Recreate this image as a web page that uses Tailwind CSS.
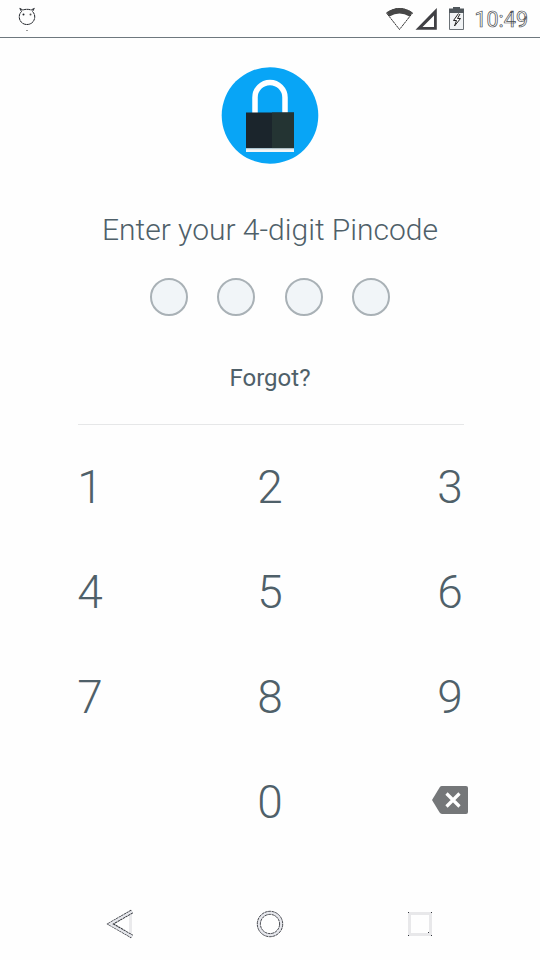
<!DOCTYPE html>
<html lang="en">
<head>
<meta charset="utf-8">
<title>Pincode</title>
<script src="https://cdn.jsdelivr.net/npm/@tailwindcss/browser@4"></script>
</head>
<body class="bg-[#fefefe]">
<div class="w-[540px] h-[960px] overflow-hidden flex flex-col items-center bg-[#fefefe] text-[#4f6069] font-['Roboto',sans-serif]">
  <header class="w-full h-[38px] shrink-0 border-b border-[#6e787e] flex items-start justify-between">
    <svg class="ml-[17px] mt-[6px]" width="20" height="26" viewBox="0 0 20 26" fill="none" stroke="#22252b" stroke-width="1" stroke-dasharray="3.5 .3">
      <path d="M4.500 5.500 2.700 2.300 5.800 4Q10 2.600 14.200 4L17.300 2.300 15.500 5.500Q18 8 17.700 11.500C17.200 16 14 18.500 10 18.500S2.800 16 2.300 11.500Q2 8 4.500 5.500"/>
      <circle cx="6.500" cy="8.600" r="1" fill="#22252b" stroke="none"/><circle cx="13.500" cy="8.600" r="1" fill="#555" stroke="none"/>
      <path d="M9 24.500h2" stroke="#999"/>
    </svg>
    <div class="flex items-start pr-[12px]">
      <svg class="mt-[6px]" width="88" height="26" viewBox="386 6 88 26">
        <path d="M386.500 13Q399.500 4 412.500 13L399.500 29.500Z" fill="#fff" stroke="#333" stroke-width="1" stroke-dasharray="2.500 .5"/>
        <path d="M386.500 12.500Q399.500 3.500 412.500 12.500L409.500 16.500Q399.500 10.500 389.500 16.500Z" fill="#474747"/>
        <path d="M436.800 8V29.700H415.500ZM434 15.500 422.500 27H434Z" fill="#404044" fill-rule="evenodd"/>
        <path d="M449.500 11H463.500V29.500H449.500Z" fill="#f1f3f5" stroke="#6b7176" stroke-width="1"/>
        <path d="M449 8.500H453V7H460V8.500H464V13H449Z" fill="#50575c"/>
        <path d="M458.500 13.500 453.500 20.500H456.500L454.500 26 460.500 18.500H457.500L460 14" fill="#fff" stroke="#222" stroke-width="1"/>
      </svg>
      <span class="mt-[7px] text-[21.500px] leading-[25px] text-white [-webkit-text-stroke:0.7px_#4a4d50]">10:49</span>
    </div>
  </header>

  <svg class="mt-[29px] shrink-0" width="98" height="97" viewBox="221 67 98 97">
    <circle cx="270" cy="115.500" r="48.300" fill="#08a5f6"/>
    <path d="M255 113V97.500a15 15 0 0 1 30 0V113" fill="none" stroke="#fff" stroke-width="5.500"/>
    <path d="M246 112.500H294V148.500H246Z" fill="#1b252c"/>
    <path d="M272 112.500H294V148.500H272Z" fill="#243433"/>
    <path d="M246 148.500H294V152H246Z" fill="#f2f6f7"/>
    <path d="M246 149H294" stroke="#d5dcdf" stroke-width="1"/>
  </svg>

  <h1 class="mt-[48px] text-[30px] leading-[35px] font-light whitespace-nowrap">Enter your 4-digit Pincode</h1>

  <div class="mt-[31px] flex gap-[29.500px]">
    <span class="size-[38px] rounded-full border-2 border-[#a9b1b6] bg-[#f1f5f8]"></span>
    <span class="size-[38px] rounded-full border-2 border-[#a9b1b6] bg-[#f1f5f8]"></span>
    <span class="size-[38px] rounded-full border-2 border-[#a9b1b6] bg-[#f1f5f8]"></span>
    <span class="size-[38px] rounded-full border-2 border-[#a9b1b6] bg-[#f1f5f8]"></span>
  </div>

  <a class="mt-[48px] text-[24px] leading-[28px]">Forgot?</a>
  <div class="mt-[32px] w-[386px] translate-x-px h-px shrink-0 bg-[#e6e7e8]"></div>

  <div class="mt-[10px] shrink-0 grid grid-cols-[repeat(3,180px)] auto-rows-[105px] place-items-center text-[46px] leading-[55px] font-light">
    <span>1</span><span>2</span><span>3</span>
    <span>4</span><span>5</span><span>6</span>
    <span>7</span><span>8</span><span>9</span>
    <span></span><span>0</span>
    <svg class="-mt-[6px]" width="36" height="28" viewBox="0 0 36 28">
      <path d="M10 0H34Q36 0 36 2V26Q36 28 34 28H10Q8.500 28 7.600 26.600L0 14 7.600 1.400Q8.500 0 10 0Z" fill="#757779"/>
      <path d="M14.500 7.500 27.500 20.500M27.500 7.500 14.500 20.500" stroke="#fff" stroke-width="3.200"/>
    </svg>
  </div>

  <nav class="mt-auto w-full h-[72px] shrink-0 grid grid-cols-[repeat(3,150px)] justify-center place-items-center">
    <svg width="30" height="30" viewBox="105 909 30 30" fill="none">
      <path d="M130.500 911.500V936.500" stroke="#eaeaec" stroke-width="3"/>
      <path d="M132 911.500 110.500 924 132 936.500" stroke="#33363c" stroke-width="4" stroke-dasharray="2.500 .5"/>
      <path d="M132 911.500 110 924 132 936.500" stroke="#e6e7ec" stroke-width="2.400"/>
    </svg>
    <svg width="28" height="28" viewBox="0 0 28 28" fill="none">
      <circle cx="14" cy="14" r="11.200" stroke="#e6e7ec" stroke-width="3"/>
      <circle cx="14" cy="14" r="12.700" stroke="#33363c" stroke-width=".9" stroke-dasharray="3 .6"/>
      <circle cx="14" cy="14" r="9.600" stroke="#33363c" stroke-width=".9" stroke-dasharray="3 .6"/>
    </svg>
    <svg width="24" height="24" viewBox="0 0 24 24" fill="none">
      <path d="M1.500 1.500H22.500V22.500H1.500Z" stroke="#e8e8ea" stroke-width="3"/>
      <path d="M0 0H1V1H0ZM23 0H24V1H23ZM0 23H1V24H0ZM23 23H24V24H23ZM20 20H21V21H20Z" fill="#33363c"/>
    </svg>
  </nav>
</div>
</body>
</html>
